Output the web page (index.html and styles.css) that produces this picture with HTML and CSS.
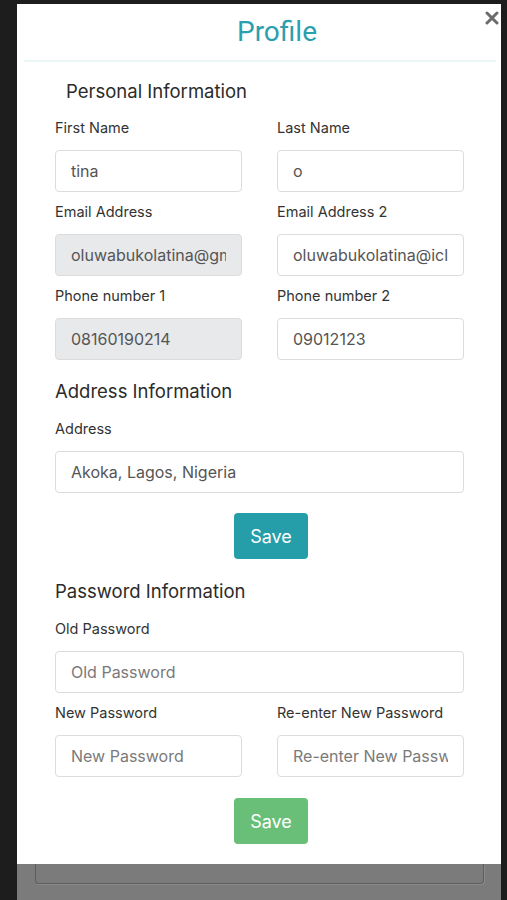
FILE: index.html
```html
<!DOCTYPE html>
<html lang="en">
<head>
<meta charset="utf-8">
<title>Profile</title>
<link rel="stylesheet" href="styles.css">
</head>
<body>
<div class="stage">
  <div class="modal">
    <div class="modal-header">
      <h1 class="modal-title">Profile</h1>
      <button class="close" aria-label="Close">
        <svg width="14" height="14" viewBox="0 0 14 14"><path d="M2 2 L12 12 M12 2 L2 12" stroke="#6b6b6b" stroke-width="3" stroke-linecap="round"/></svg>
      </button>
    </div>
    <div class="header-rule"></div>
    <div class="modal-body">
      <h2 class="section-title indent">Personal Information</h2>
      <div class="row">
        <div class="group">
          <label class="label">First Name</label>
          <input class="field" type="text" value="tina">
        </div>
        <div class="group">
          <label class="label">Last Name</label>
          <input class="field" type="text" value="o">
        </div>
      </div>
      <div class="row">
        <div class="group">
          <label class="label">Email Address</label>
          <input class="field disabled" type="text" value="oluwabukolatina@gmail.com" disabled>
        </div>
        <div class="group">
          <label class="label">Email Address 2</label>
          <input class="field" type="text" value="oluwabukolatina@icloud.com">
        </div>
      </div>
      <div class="row">
        <div class="group">
          <label class="label">Phone number 1</label>
          <input class="field disabled" type="text" value="08160190214" disabled>
        </div>
        <div class="group">
          <label class="label">Phone number 2</label>
          <input class="field" type="text" value="09012123">
        </div>
      </div>

      <h2 class="section-title after-row">Address Information</h2>
      <div class="group">
        <label class="label">Address</label>
        <input class="field" type="text" value="Akoka, Lagos, Nigeria">
      </div>
      <div class="actions">
        <button class="btn btn-teal">Save</button>
      </div>

      <h2 class="section-title after-btn">Password Information</h2>
      <div class="group">
        <label class="label">Old Password</label>
        <input class="field" type="password" placeholder="Old Password">
      </div>
      <div class="row">
        <div class="group">
          <label class="label">New Password</label>
          <input class="field" type="password" placeholder="New Password">
        </div>
        <div class="group">
          <label class="label">Re-enter New Password</label>
          <input class="field" type="password" placeholder="Re-enter New Password">
        </div>
      </div>
      <div class="actions after-row">
        <button class="btn btn-green">Save</button>
      </div>
    </div>
  </div>
  <div class="below">
    <div class="textarea-edge"></div>
  </div>
</div>
</body>
</html>
```

FILE: styles.css
```css
* { box-sizing: border-box; }

html, body {
  margin: 0;
  padding: 0;
  background: #1d1d1d;
  height: 900px;
  overflow: hidden;
}

body {
  font-family: Inter, "Noto Sans", sans-serif;
  color: #333;
}

.stage {
  width: 484px;
  margin-left: 17px;
  padding-top: 4px;
}

.modal {
  background: #fff;
  padding-bottom: 20px;
}

.modal-header {
  position: relative;
  height: 56px;
  padding-top: 11px;
  text-align: center;
}

.modal-title {
  margin: 0;
  font-family: Roboto, "Noto Sans", sans-serif;
  font-weight: 400;
  font-size: 28px;
  line-height: 34px;
  color: #2a9fb0;
  padding-left: 36px;
}

.close {
  position: absolute;
  top: 5px;
  right: 0;
  width: 18px;
  height: 18px;
  padding: 0;
  border: 0;
  background: none;
  display: flex;
  align-items: center;
  justify-content: center;
}

.header-rule {
  height: 2px;
  margin: 0 5px 0 7px;
  background: #eaf7f6;
}

.modal-body {
  padding: 18px 37px 0 38px;
}

.section-title {
  margin: 0 0 16px;
  font-weight: 400;
  font-size: 18.5px;
  line-height: 22px;
  color: #2b2b2b;
}

.section-title.indent { padding-left: 11px; }
.section-title.after-row { margin-top: 10px; margin-bottom: 17px; }
.section-title.after-btn { margin-top: 21px; margin-bottom: 17px; }

.row {
  display: grid;
  grid-template-columns: 187px 187px;
  column-gap: 35px;
}

.group {
  margin-bottom: 10px;
}

.label {
  display: block;
  font-size: 14.5px;
  line-height: 20px;
  margin-bottom: 12px;
  color: #333;
}

.field {
  display: block;
  width: 100%;
  height: 42px;
  padding: 0 15px;
  font-family: Inter, "Noto Sans", sans-serif;
  font-size: 16px;
  color: #555;
  background: #fff;
  border: 1px solid #dcdcdc;
  border-radius: 4px;
  outline: none;
}

.field::placeholder { color: #7a7a7a; opacity: 1; }

.field.disabled {
  background: #e8e9eb;
  color: #555;
  -webkit-text-fill-color: #555;
}

.actions {
  display: flex;
  justify-content: center;
  margin-top: 20px;
  padding-left: 23px;
}

.actions.after-row { margin-top: 11px; }

.btn {
  height: 46px;
  width: 74px;
  border: 0;
  border-radius: 4px;
  color: #fff;
  font-family: Inter, "Noto Sans", sans-serif;
  font-size: 18px;
  padding: 0;
}

.btn-teal { background: #259ea9; }
.btn-green { background: #69be78; }

.below {
  height: 36px;
  background: #7b7b7b;
  padding: 0 17px 0 18px;
}

.textarea-edge {
  height: 20px;
  border: 1px solid #5e5e5e;
  border-top: 0;
  border-radius: 0 0 4px 4px;
  box-shadow: 1px 1px 0 #8a8a8a;
}
```
